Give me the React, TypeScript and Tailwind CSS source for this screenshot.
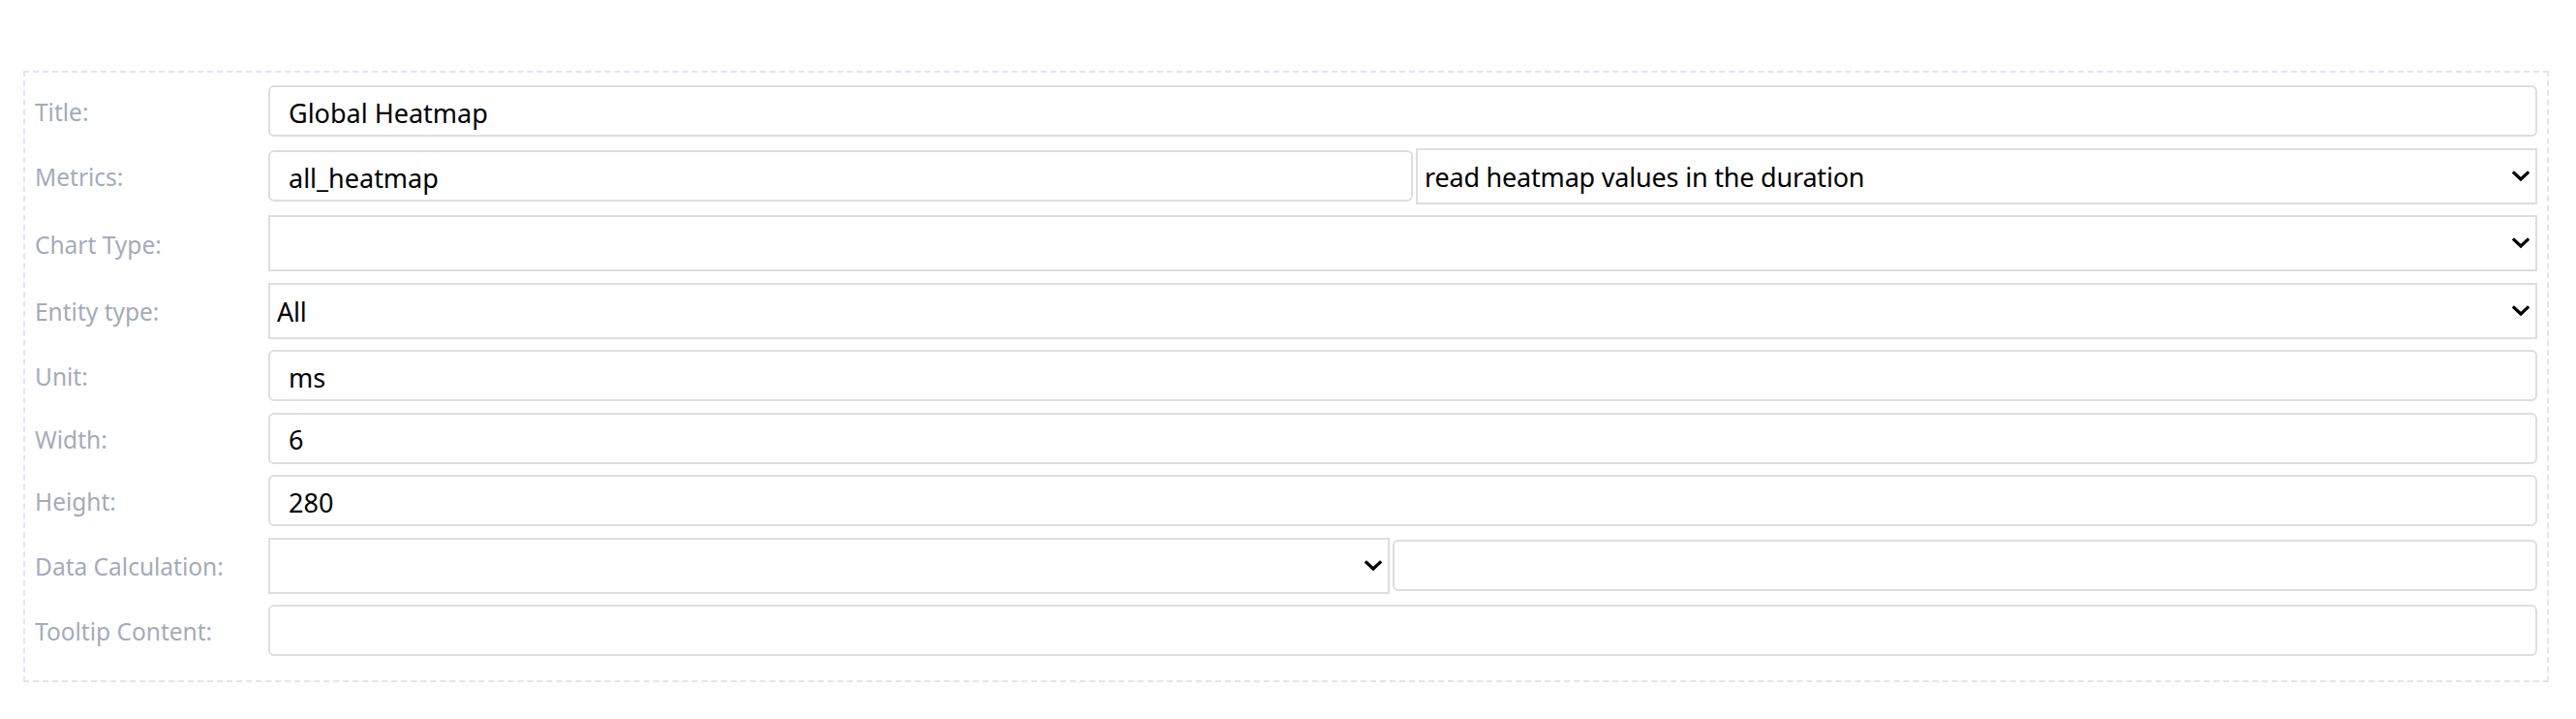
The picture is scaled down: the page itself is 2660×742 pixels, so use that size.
import React from 'react';

const font = { fontFamily: '"Noto Sans", "Open Sans", Arial, sans-serif' };

const Chevron: React.FC = () => (
  <svg
    className="pointer-events-none absolute right-[8px] top-1/2 -translate-y-1/2"
    width="18"
    height="12"
    viewBox="0 0 18 12"
    fill="none"
  >
    <path d="M2 2.5 L9 9 L16 2.5" stroke="#000" strokeWidth="3.2" strokeLinecap="square" />
  </svg>
);

const Select: React.FC<{ value?: string; className?: string }> = ({ value = '', className = '' }) => (
  <div className={`relative h-[58px] ${className}`}>
    <select
      value={value}
      onChange={() => {}}
      className="h-full w-full appearance-none border-2 border-[#dedede] bg-white pl-[7px] pr-[36px] pt-[3px] text-[27px] tracking-[-0.2px] text-black outline-none"
      style={font}
    >
      <option value={value}>{value}</option>
    </select>
    <Chevron />
  </div>
);

const TextInput: React.FC<{ value?: string; className?: string }> = ({ value = '', className = '' }) => (
  <input
    value={value}
    onChange={() => {}}
    className={`h-[53px] rounded-[6px] border-2 border-[#dedede] bg-white px-[19px] pt-[3px] text-[27px] text-black outline-none ${className}`}
    style={font}
  />
);

const Row: React.FC<{ label: string; children: React.ReactNode }> = ({ label, children }) => (
  <div className="flex items-center">
    <div className="w-[241px] shrink-0 pt-[4px] text-[24.5px] text-[#a5abb9]" style={font}>
      {label}
    </div>
    <div className="flex flex-1 items-center gap-[3px]">{children}</div>
  </div>
);

export default function App() {
  return (
    <div className="min-h-[742px] w-full bg-white pt-[73px] pl-[24px] pr-[28px]">
      <div className="flex flex-col gap-[11.5px] border-2 border-dashed border-[#e2e4ef] pt-[13px] pb-[25px] pl-[10px] pr-[10px]">
        <Row label="Title:">
          <TextInput value="Global Heatmap" className="flex-1" />
        </Row>
        <Row label="Metrics:">
          <TextInput value="all_heatmap" className="h-[52px] flex-1" />
          <Select value="read heatmap values in the duration" className="w-[1158px]" />
        </Row>
        <Row label="Chart Type:">
          <Select className="flex-1" />
        </Row>
        <Row label="Entity type:">
          <Select value="All" className="flex-1" />
        </Row>
        <Row label="Unit:">
          <TextInput value="ms" className="flex-1" />
        </Row>
        <Row label="Width:">
          <TextInput value="6" className="flex-1" />
        </Row>
        <Row label="Height:">
          <TextInput value="280" className="flex-1" />
        </Row>
        <Row label="Data Calculation:">
          <Select className="w-[1158px]" />
          <TextInput className="h-[52px] flex-1" />
        </Row>
        <Row label="Tooltip Content:">
          <TextInput className="flex-1" />
        </Row>
      </div>
    </div>
  );
}
